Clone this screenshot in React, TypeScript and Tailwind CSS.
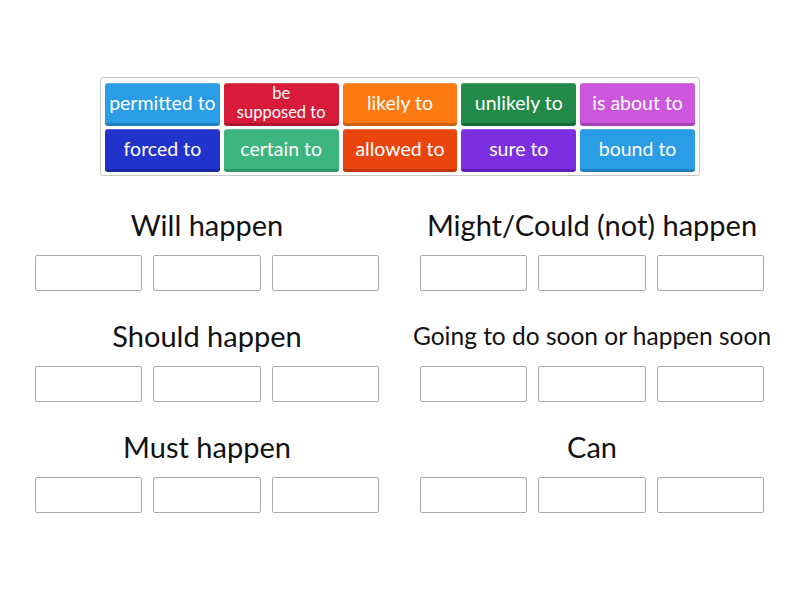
const tiles = [
  { label: 'permitted to', bg: 'bg-[#2b9ce6]', edge: 'border-b-[#1f7fc2]' },
  { label: 'be supposed to', bg: 'bg-[#d81b3b]', edge: 'border-b-[#ad1430]', two: true },
  { label: 'likely to', bg: 'bg-[#fb7a12]', edge: 'border-b-[#d0600a]' },
  { label: 'unlikely to', bg: 'bg-[#228a48]', edge: 'border-b-[#186c37]' },
  { label: 'is about to', bg: 'bg-[#cc56dc]', edge: 'border-b-[#a83fb8]' },
  { label: 'forced to', bg: 'bg-[#2233cc]', edge: 'border-b-[#1a27a3]' },
  { label: 'certain to', bg: 'bg-[#3db57f]', edge: 'border-b-[#2e9466]' },
  { label: 'allowed to', bg: 'bg-[#e9450c]', edge: 'border-b-[#bf3608]' },
  { label: 'sure to', bg: 'bg-[#7b2fe0]', edge: 'border-b-[#6020b8]' },
  { label: 'bound to', bg: 'bg-[#2b9ce6]', edge: 'border-b-[#1f7fc2]' },
];

const groups = [
  { title: 'Will happen', small: false },
  { title: 'Might/Could (not) happen', small: false },
  { title: 'Should happen', small: false },
  { title: 'Going to do soon or happen soon', small: true },
  { title: 'Must happen', small: false },
  { title: 'Can', small: false },
];

function Tile({ label, bg, edge, two }: { label: string; bg: string; edge: string; two?: boolean }) {
  return (
    <div
      className={`flex h-[43px] items-center justify-center rounded-[3px] border-b-[3px] ${bg} ${edge} text-center text-white shadow-[inset_0_1px_0_rgba(255,255,255,0.2)]`}
    >
      {two ? (
        <div className="flex flex-col text-[16.5px] leading-[19px]">
          <span>be</span>
          <span>supposed to</span>
        </div>
      ) : (
        <span className="whitespace-nowrap text-[19.5px] leading-none">{label}</span>
      )}
    </div>
  );
}

export default function App() {
  return (
    <div className="relative h-[600px] w-[800px] bg-white font-['Lato','Noto_Sans',sans-serif] text-[#111]">
      <div className="pt-[77px]">
        <div className="ml-[100px] grid w-[600px] grid-cols-5 gap-x-[4px] gap-y-[3px] rounded-[3px] border border-[#c8c8c8] px-[4px] pb-[3px] pt-[5px]">
          {tiles.map((t) => (
            <Tile key={t.label} {...t} />
          ))}
        </div>
      </div>

      <div className="ml-[35px] mt-[31px] grid w-[729px] grid-cols-2 gap-x-[41px] gap-y-[27px]">
        {groups.map((g) => (
          <div key={g.title} className="flex flex-col items-center">
            <div
              className={`flex h-[36px] items-center whitespace-nowrap ${
                g.small ? 'text-[24.5px]' : 'text-[29px]'
              }`}
            >
              {g.title}
            </div>
            <div className="mt-[12px] grid w-full grid-cols-3 gap-x-[11px]">
              {[0, 1, 2].map((i) => (
                <div key={i} className="h-[36px] rounded-[2px] border border-[#aaaaaa] bg-white" />
              ))}
            </div>
          </div>
        ))}
      </div>
    </div>
  );
}
